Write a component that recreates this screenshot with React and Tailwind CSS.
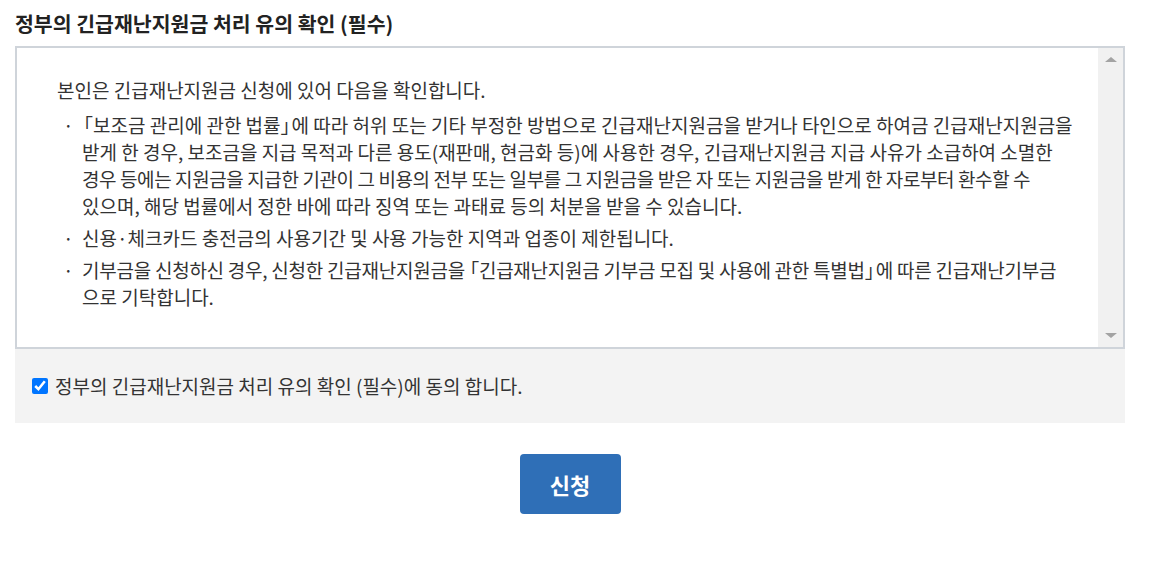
import { useState } from "react";

const font = { fontFamily: '"Noto Sans CJK KR", "Noto Sans", sans-serif' };

const bullets = [
  [
    <>
      <span className="-ml-[8px]">「</span>보조금 관리에 관한 법률<span className="tracking-[-8px]">」</span>에 따라 허위 또는 기타 부정한 방법으로 긴급재난지원금을 받거나 타인으로 하여금 긴급재난지원금을
    </>,
    "받게 한 경우, 보조금을 지급 목적과 다른 용도(재판매, 현금화 등)에 사용한 경우, 긴급재난지원금 지급 사유가 소급하여 소멸한",
    <span className="tracking-[-0.4px]">
      경우 등에는 지원금을 지급한 기관이 그 비용의 전부 또는 일부를 그 지원금을 받은 자 또는 지원금을 받게 한 자로부터 환수할 수
    </span>,
    "있으며, 해당 법률에서 정한 바에 따라 징역 또는 과태료 등의 처분을 받을 수 있습니다.",
  ],
  ["신용·체크카드 충전금의 사용기간 및 사용 가능한 지역과 업종이 제한됩니다."],
  [
    <span className="tracking-[-0.25px]">
      기부금을 신청하신 경우, 신청한 긴급재난지원금<span className="tracking-[-5px]">을</span>「긴급재난지원금 기부금 모집 및 사용에 관한 특별법<span className="tracking-[-8px]">」</span>에 따른 긴급재난기부금
    </span>,
    "으로 기탁합니다.",
  ],
];

export default function App() {
  const [agreed, setAgreed] = useState(true);

  return (
    <div className="h-[573px] w-[1150px] bg-white text-[#222]" style={font}>
      <div className="box-content w-[1110px] pl-[15px] pt-[8px]">
        <h2 className="text-[20.5px] font-bold leading-[30px]">
          정부의 긴급재난지원금 처리 유의 확인 (필수)
        </h2>

        <div className="mt-[8px] flex h-[303px] border-2 border-[#cfd4da] bg-white">
          <div className="flex-1 overflow-hidden pl-[40px] pt-[28px] text-[19px] leading-[27px] text-[#333]">
            <p>본인은 긴급재난지원금 신청에 있어 다음을 확인합니다.</p>
            <ul className="mt-[8px] space-y-[5px]">
              {bullets.map((lines, i) => (
                <li key={i} className="flex">
                  <span className="w-[25px] shrink-0 pl-[6px]">·</span>
                  <span>
                    {lines.map((line, j) => (
                      <span key={j} className="block whitespace-nowrap">
                        {line}
                      </span>
                    ))}
                  </span>
                </li>
              ))}
            </ul>
          </div>
          <div className="flex w-[25px] flex-col items-center justify-between bg-[#f1f1f1] py-[9px]">
            <div className="h-0 w-0 border-x-[6px] border-b-[5px] border-x-transparent border-b-[#a3a3a3]" />
            <div className="h-0 w-0 border-x-[6px] border-t-[5px] border-x-transparent border-t-[#a3a3a3]" />
          </div>
        </div>

        <div className="flex h-[74px] items-center bg-[#f3f3f3] pl-[17px]">
          <label className="flex items-center gap-[7px] text-[19px] text-[#333]">
            <input
              type="checkbox"
              checked={agreed}
              onChange={(e) => setAgreed(e.target.checked)}
              className="m-0 h-[16px] w-[16px] accent-[#0075ff]"
            />
            정부의 긴급재난지원금 처리 유의 확인 (필수)에 동의 합니다.
          </label>
        </div>

        <div className="mt-[31px] flex justify-center">
          <button className="h-[60px] w-[101px] rounded-[4px] bg-[#2f6fb7] text-[22px] font-bold text-white">
            신청
          </button>
        </div>
      </div>
    </div>
  );
}
